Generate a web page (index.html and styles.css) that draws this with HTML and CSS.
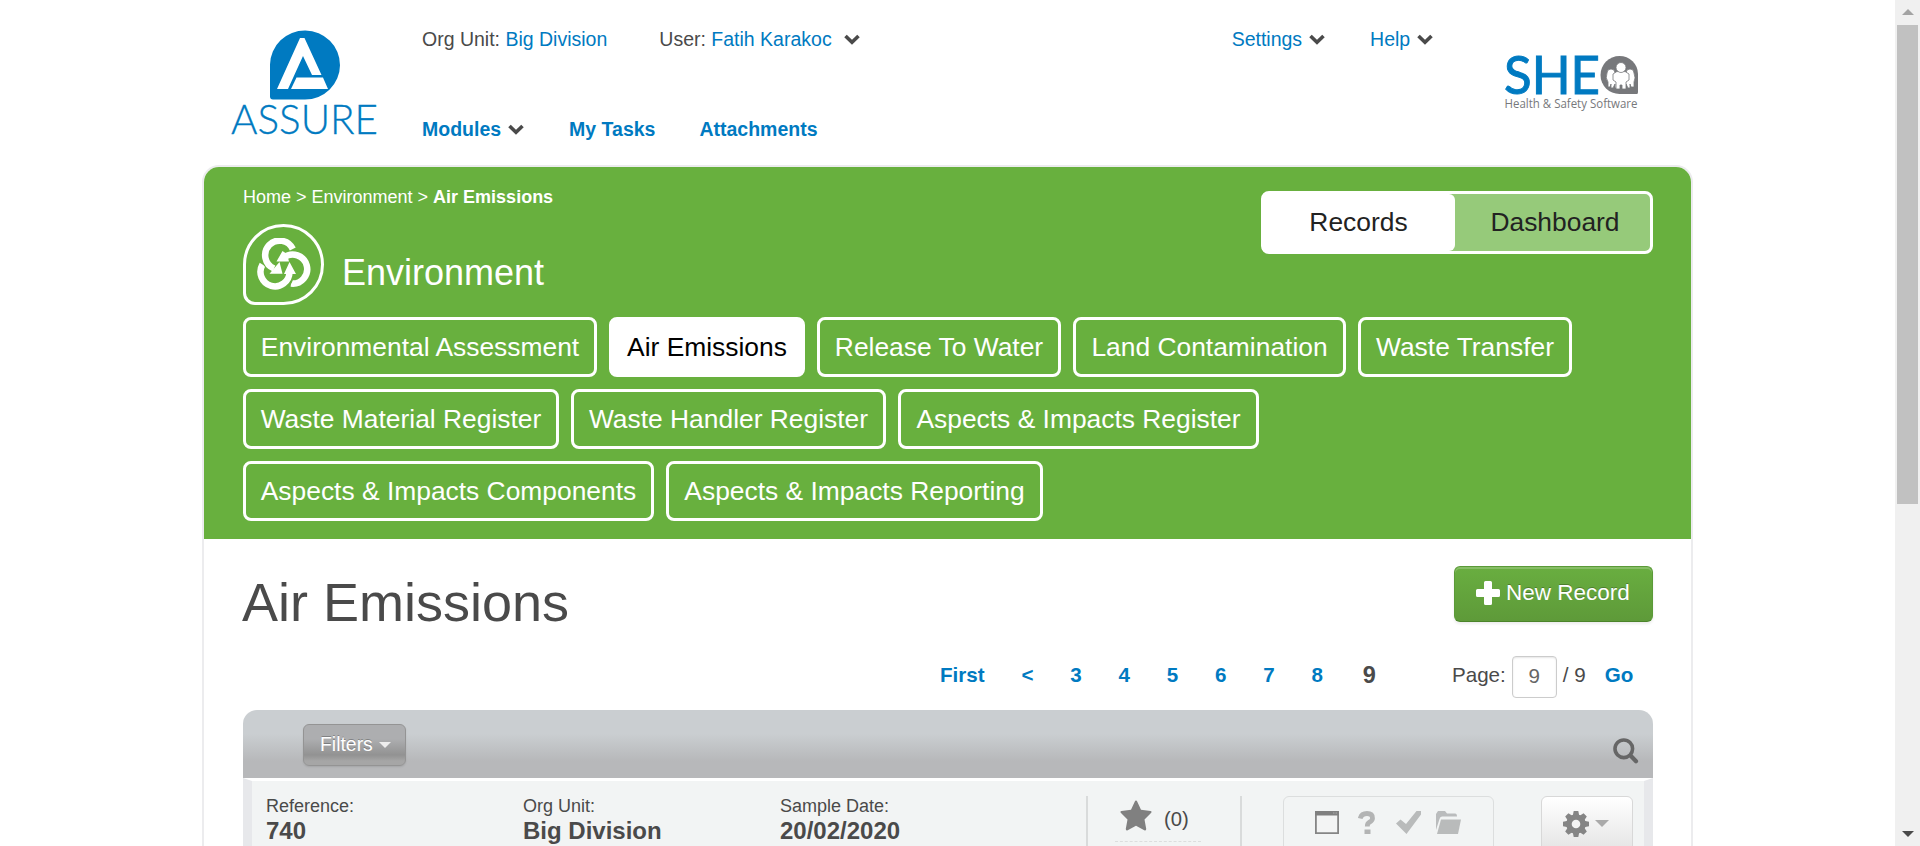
FILE: index.html
```html
<!DOCTYPE html>
<html lang="en">
<head>
<meta charset="utf-8">
<title>Air Emissions</title>
<link rel="stylesheet" href="styles.css">
</head>
<body>
<svg width="0" height="0" class="defs">
  <symbol id="chev" viewBox="0 0 16 11"><path d="M1.500 2 8 8.200 14.500 2" fill="none" stroke="#4a4a4a" stroke-width="3.600"/></symbol>
</svg>
<div class="window">
<div class="page">
  <header class="top">
    <svg class="assure" width="150" height="112" viewBox="0 0 150 112">
      <path d="M39 34.500A35 34.500 0 1 1 74 69.500H42Q39 69.500 39 66.500Z" fill="#007ac1"/>
      <path d="M46 59 69 8H73.500L90.500 45H81L72 26 57 59Z" fill="#fff"/>
      <path d="M60 59 65.500 47.500H92L97 59Z" fill="#fff"/>
      <text class="assure-word" x="0" y="104" textLength="147" lengthAdjust="spacingAndGlyphs">ASSURE</text>
    </svg>
    <div class="menus">
      <div class="menu-row account">
        <span class="org">Org Unit: <a>Big Division</a></span>
        <span class="user">User: <a>Fatih Karakoc</a></span>
        <svg class="chev chev-user"><use href="#chev"/></svg>
        <a class="settings">Settings</a><svg class="chev"><use href="#chev"/></svg>
        <a class="help">Help</a><svg class="chev"><use href="#chev"/></svg>
      </div>
      <nav class="menu-row main-nav">
        <a class="modules">Modules</a><svg class="chev"><use href="#chev"/></svg>
        <a class="tasks">My Tasks</a>
        <a class="attach">Attachments</a>
      </nav>
    </div>
    <svg class="she" width="136" height="60" viewBox="0 0 136 60">
      <text class="she-word" x="1" y="39.500" textLength="96" lengthAdjust="spacingAndGlyphs">SHE</text>
      <path d="M116.500 2A19 19 0 1 0 116.500 40H134Q135 40 135 38V20A18.500 18 0 0 0 116.500 2Z" fill="#77787b"/>
      <g transform="translate(-1 0)" fill="#fff" stroke="#77787b" stroke-width=".8">
        <path d="M105 19a4 4 0 0 1 8 0l3 3 1 12h-4v-4l-2 4h-2v-4l-1 3h-2v-5q-3-4-1-9z"/>
        <path d="M132 19a4 4 0 0 0-8 0l-3 3-1 12h4v-4l2 4h2v-4l1 3h3v-5q2-4 0-9z"/>
        <path d="M111 20q3-3 8-3t8 3v6l-3 2v7h-4v-4h-2v4h-4v-7l-3-2z"/>
        <circle cx="119" cy="13.500" r="5"/>
      </g>
      <text class="she-sub" x="1.500" y="53.500" textLength="133" lengthAdjust="spacingAndGlyphs">Health &amp; Safety Software</text>
    </svg>
  </header>

  <main class="card">
    <section class="banner">
      <div class="banner-top">
        <div>
          <div class="crumbs">Home &gt; Environment &gt; <b>Air Emissions</b></div>
          <div class="module">
            <span class="module-icon">
              <svg width="54" height="54" viewBox="0 0 54 54">
                <g fill="none" stroke-width="9" stroke="#68b03e">
                  <path stroke="#fff" stroke-width="6.500" d="M27 19.500A14.500 14.500 0 1 1 34 45.500"/>
                  <path d="M6 27.500A14.500 14.500 0 1 0 32.500 36"/>
                  <path stroke="#fff" stroke-width="6.500" d="M5.500 26.500A14.500 14.500 0 1 0 32.500 34"/>
                  <path d="M34 8A14.500 14.500 0 1 0 17 31"/>
                  <path stroke="#fff" stroke-width="6.500" d="M35.800 11A14.500 14.500 0 1 0 17 30.500"/>
                </g>
                <path d="M12.500 35.800H25.500L22.500 24ZM19.500 23.500H32L30 16 25.500 13ZM27 36H39L32.500 24Z" fill="#fff"/>
              </svg>
            </span>
            <h2>Environment</h2>
          </div>
        </div>
        <div class="toggle"><span class="on">Records</span><span class="off">Dashboard</span></div>
      </div>
      <div class="tabs">
        <a class="w354">Environmental Assessment</a><a class="w196 active">Air Emissions</a><a class="w244">Release To Water</a><a class="w273">Land Contamination</a><a class="w214">Waste Transfer</a>
        <a class="w316">Waste Material Register</a><a class="w315">Waste Handler Register</a><a class="w361">Aspects &amp; Impacts Register</a>
        <a class="w411">Aspects &amp; Impacts Components</a><a class="w377">Aspects &amp; Impacts Reporting</a>
      </div>
    </section>

    <section class="content">
      <div class="title-row">
        <h1>Air Emissions</h1>
        <button class="new"><svg width="24" height="24" viewBox="0 0 24 24"><path d="M8 1.500Q8 0 9.500 0h5Q16 0 16 1.500V8h6.500Q24 8 24 9.500v5q0 1.500-1.500 1.500H16v6.500q0 1.500-1.500 1.500h-5Q8 24 8 22.500V16H1.500Q0 16 0 14.500v-5Q0 8 1.500 8H8z" fill="#fff"/></svg><span>New Record</span></button>
      </div>
      <div class="pager">
        <a class="first">First</a><a class="prev">&lt;</a><a>3</a><a>4</a><a>5</a><a>6</a><a>7</a><a>8</a><b>9</b>
        <span class="lbl">Page:</span><span class="field">9</span><span class="total">/ 9</span><a class="go">Go</a>
      </div>
      <div class="table-head">
        <button class="filters">Filters<i></i></button>
        <svg width="26" height="26" viewBox="0 0 26 26"><circle cx="10.800" cy="10.800" r="8.800" fill="none" stroke="#666" stroke-width="3.600"/><path d="M17.500 17.500 23 23.200" stroke="#666" stroke-width="4.200" stroke-linecap="round"/></svg>
      </div>
      <div class="record">
        <div class="cell">Reference:<b>740</b></div>
        <div class="cell">Org Unit:<b>Big Division</b></div>
        <div class="cell">Sample Date:<b>20/02/2020</b></div>
        <div class="rating">
          <div class="stars">
            <svg width="32" height="31" viewBox="0 0 32 31"><path d="M16 .6Q16.800.6 17.300 1.700L21 9.700 30.500 11Q32.300 11.500 31 13L24.500 19.500 26.200 28.800Q26.300 31 24.300 30.200L16 25.800 7.700 30.200Q5.700 31 5.800 28.800L7.500 19.500 1 13Q-.3 11.500 1.500 11L11 9.700 14.700 1.700Q15.200.6 16 .6Z" fill="#808080"/></svg>
            <span>(0)</span>
          </div>
        </div>
        <div class="flags">
          <svg width="24" height="23" viewBox="0 0 24 23"><path d="M.9.900H23.100V22.100H.9z" fill="#f3f4f4" stroke="#858585" stroke-width="1.800"/><path d="M0 0H24V4.500H0z" fill="#808080"/><path d="M18 2h1.500M20.500 2H22" stroke="#aaa"/></svg>
          <svg width="18" height="23" viewBox="0 0 18 23"><path d="M2.200 7.500Q3.500 2.500 9 2.500t5.500 4.700Q14.500 9.500 11.500 11.200 9.300 12.500 9.300 15.500" fill="none" stroke="#b3b4b4" stroke-width="4.800"/><path d="M6.500 18.500h6V23h-6z" fill="#b3b4b4"/></svg>
          <svg width="25" height="23" viewBox="0 0 25 23"><path d="M0 12.500 4.500 8.500 10 13 20.500 0H25V3.500L10.500 23z" fill="#b9bbbb"/></svg>
          <svg width="25" height="23" viewBox="0 0 25 23"><path d="M0 3 2 0H9L11 2.500H19Q21 2.500 21 5.500H6Q4 5.500 3.500 8L0 19z" fill="#babcbd"/><path d="M5 8.500H25L22 23H1z" fill="#b9bbbb"/></svg>
        </div>
        <div class="gear">
          <svg width="26" height="26" viewBox="-13 -13 26 26"><g fill="#858585"><circle r="9.800"/><g id="t"><path d="M-2.300-13H2.300L3.300-8H-3.300zM-2.300 13H2.300L3.300 8H-3.300z"/><path d="M-13-2.300V2.300L-8 3.300V-3.300zM13-2.300V2.300L8 3.300V-3.300z"/></g><use href="#t" transform="rotate(45)"/></g><circle r="4.300" fill="#f4f4f4"/></svg>
          <i></i>
        </div>
      </div>
    </section>
  </main>
</div>
<div class="scrollbar"><i class="up"></i><div class="thumb"></div><i class="down"></i></div>
</div>
</body>
</html>
```
FILE: styles.css
```css
* { box-sizing: border-box; }
body { margin: 0; height: 846px; overflow: hidden; background: #fff; color: #4a4a4a; font-family: "Liberation Sans", Arial, sans-serif; font-size: 20.25px; }
.defs { position: absolute; }
a { color: #007ac1; }
h1, h2 { margin: 0; font-weight: 400; }
.window { display: flex; height: 846px; overflow: hidden; }
.page { flex: 1; padding: 0 204px; }

.top { display: flex; height: 167px; }
.assure, .she { overflow: visible; }
.assure { margin: 30px 0 0 27px; flex: none; }
.assure-word { font-family: Lato, sans-serif; font-weight: 300; font-size: 42px; fill: #007ac1; stroke: #007ac1; stroke-width: .3px; }
.menus { margin-left: 41px; width: 1030px; flex: none; }
.menu-row { display: flex; align-items: center; height: 24px; white-space: nowrap; font-size: 19.5px; }
.menu-row > * { flex: none; }
.account { margin-top: 27px; }
.main-nav { margin-top: 66px; font-weight: 700; }
.chev { width: 16px; height: 11px; margin-left: 7px; }
.user { margin-left: 52px; }
.chev-user { margin-left: 12px; }
.settings { margin-left: 372px; }
.help { margin-left: 45px; }
.tasks { margin-left: 45px; }
.attach { margin-left: 44px; }
.she { margin: 54px 0 0 51px; flex: none; }
.she-word { font-family: Lato, sans-serif; font-weight: 400; font-size: 53px; fill: #007ac1; stroke: #007ac1; stroke-width: 1px; }
.she-sub { font-family: "Open Sans", sans-serif; font-size: 12px; fill: #77787b; }

.card { width: 1487px; height: 900px; border-radius: 15px 15px 0 0; background: #fff; box-shadow: 0 0 0 2px #ececee; }
.banner { height: 372px; background: #68b03e; border-radius: 15px 15px 0 0; color: #fff; padding: 18px 38px 18px 39px; }
.banner-top { display: flex; justify-content: space-between; height: 132px; }
.crumbs { font-size: 18px; line-height: 24px; }
.module { display: flex; margin-top: 15px; }
.module-icon { width: 81px; height: 81px; border: 3px solid #fff; border-radius: 50% 50% 50% 12px; padding: 10.5px; }
.module-icon svg { display: block; }
.module h2 { font-size: 36px; line-height: 42px; margin: 28px 0 0 18px; }
.toggle { display: flex; width: 392px; height: 63px; margin-top: 6px; border: 3px solid #fff; border-radius: 8px; background: #96ca7a; color: #222; font-size: 26.4px; line-height: 57px; text-align: center; }
.on { width: 191px; background: #fff; border-radius: 0 6px 6px 0; padding-right: 2px; }
.off { flex: 1; padding-left: 5px; }
.tabs { display: flex; flex-wrap: wrap; gap: 12px; width: 1380px; }
.tabs a { height: 60px; border: 3px solid #fff; border-radius: 8px; color: #fff; font-size: 26.4px; line-height: 54px; text-align: center; white-space: nowrap; }
.tabs .active { background: #fff; color: #000; }
.w354 { width: 354px; } .w196 { width: 196px; } .w244 { width: 244px; } .w273 { width: 273px; } .w214 { width: 214px; }
.w316 { width: 316px; } .w315 { width: 315px; } .w361 { width: 361px; margin-right: 200px; }
.w411 { width: 411px; } .w377 { width: 377px; }

.content { padding: 27px 38px 0 39px; }
.title-row { display: flex; justify-content: space-between; height: 90px; }
h1 { font-size: 54px; line-height: 62px; margin: 5px 0 0 -1px; }
button { font-family: inherit; color: #fff; }
.new { display: flex; align-items: center; width: 199px; height: 56px; padding: 0 0 2px 21px; gap: 6px; border: 1px solid #5b9a38; border-bottom-color: #4b842a; border-radius: 6px; background: linear-gradient(#69ae40, #5e9a39); box-shadow: inset 0 2px 0 rgba(255,255,255,.2), 0 2px 3px rgba(0,0,0,.08); font-size: 22.5px; text-shadow: 0 -1px 0 rgba(0,0,0,.25); white-space: nowrap; }
.pager { display: flex; align-items: center; height: 42px; margin-bottom: 12px; padding-left: 697px; white-space: nowrap; font-size: 20.6px; }
.pager > :not(.field) { padding-bottom: 4px; }
.pager a { font-weight: 700; margin-right: 36.8px; }
.pager b { font-size: 23.5px; margin-left: 3px; }
.pager .lbl { margin-left: 76px; }
.field { width: 45px; height: 42px; margin: 0 6px; border: 1px solid #ccc; border-radius: 4px; line-height: 38px; text-align: center; color: #666; box-shadow: inset 0 1px 2px rgba(0,0,0,.1); }
.pager .go { margin: 0 0 0 19px; }
.table-head { display: flex; justify-content: space-between; height: 68px; padding: 14px 14px 0 60px; border-radius: 14px 14px 0 0; background: linear-gradient(#caced1 0 35%, #b7b8ba 75%); }
.table-head > svg { margin-top: 13.5px; }
.filters { display: flex; align-items: center; width: 103px; height: 42px; padding: 0 0 2px 16px; border: 1px solid #949494; border-radius: 6px; background: linear-gradient(#adaeb0 35%, #929292 75%, #a6a6a6 90%); font-size: 19.4px; text-shadow: 0 -1px 0 rgba(0,0,0,.25); box-shadow: 0 1px 2px rgba(0,0,0,.1); }
i { display: block; border: 6px solid transparent; border-bottom: 0; }
.filters i { border-top-color: #eee; margin: 2px 0 0 6px; }
.record { display: flex; height: 200px; border: solid #e7e8eb; border-width: 3px 9px 0; border-top-color: #fff; background: #f2f4f4; padding: 15px 0 0 14px; }
.record > * { flex: none; }
.cell { width: 257px; font-size: 18px; line-height: 20px; }
.cell b { display: block; font-size: 24px; line-height: 30px; }
.rating { width: 156px; margin-left: 49px; border: solid #d9dbdb; border-width: 0 2px; padding: 4px 39px 0 27px; }
.stars { display: flex; height: 42px; padding-left: 5px; border-bottom: 1px dashed #dcdede; }
.stars span { margin: 8px 0 0 12px; }
.flags { display: flex; width: 211px; margin-left: 41px; border: 1px solid #dcdede; border-radius: 6px; padding: 14px 0 0 31px; }
.flags svg:nth-child(2) { margin-left: 19px; }
.flags svg:nth-child(3) { margin-left: 20px; }
.flags svg:nth-child(4) { margin-left: 15px; }
.gear { display: flex; width: 92px; height: 60px; margin-left: 47px; padding: 14px 0 0 21px; border: 1px solid #d8d8d8; border-radius: 6px; background: linear-gradient(#fff, #e2e2e2); }
.gear i { border-width: 7px 7px 0; border-top-color: #aaa; margin: 9px 0 0 6px; height: 7px; }

.scrollbar { flex: none; width: 25px; background: #f0f0f0; display: flex; flex-direction: column; align-items: center; padding: 9px 0; }
.up { border: 6px solid transparent; border-top: 0; border-bottom-color: #a3a3a3; }
.thumb { width: 21px; height: 479px; margin-top: 10px; background: #c1c1c1; }
.down { border-top-color: #4a4a4a; margin-top: auto; }
```
